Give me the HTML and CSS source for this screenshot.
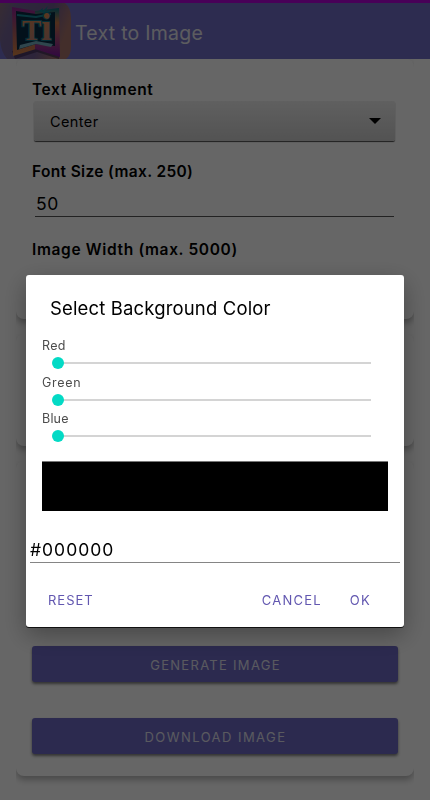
FILE: index.html
```
<!DOCTYPE html>
<html lang="en">
<head>
  <meta charset="UTF-8" />
  <meta name="viewport" content="width=device-width, initial-scale=1.0" />
  <title>Text to Image</title>
  <link rel="stylesheet" href="styles.css">
</head>
<body>
  <!-- App bar -->
  <header class="app-bar">
    <svg class="logo" width="72" height="56" viewBox="0 3 72 56">
      <defs>
        <linearGradient id="tile" x1="0" y1="0" x2="1" y2="0.3">
          <stop offset="0" stop-color="#8a6f80" />
          <stop offset="0.22" stop-color="#746497" />
          <stop offset="0.7" stop-color="#6f5a91" />
          <stop offset="1" stop-color="#a8746c" />
        </linearGradient>
        <linearGradient id="frameLeft" x1="0" y1="0" x2="0" y2="1">
          <stop offset="0" stop-color="#96229b" />
          <stop offset="0.45" stop-color="#a65765" />
          <stop offset="1" stop-color="#d98644" />
        </linearGradient>
        <linearGradient id="frameRight" x1="0" y1="0" x2="0" y2="1">
          <stop offset="0" stop-color="#087082" />
          <stop offset="0.3" stop-color="#c87748" />
          <stop offset="0.65" stop-color="#a6477d" />
          <stop offset="1" stop-color="#7a14a0" />
        </linearGradient>
        <linearGradient id="letters" x1="0" y1="0" x2="0" y2="1">
          <stop offset="0" stop-color="#e58a48" />
          <stop offset="1" stop-color="#b5807c" />
        </linearGradient>
      </defs>
      <path d="M0 3H65Q71 8 71 18V47Q71 55 66 59H7Q1 52 0 40Z" fill="url(#tile)" />
      <path d="M12 51L36 46L60 54L59 59L37 52L15 59Z" fill="#3d2b52" opacity=".7" />
      <path d="M12 7L36 11V49L13 56Z" fill="url(#frameLeft)" />
      <path d="M35 11L59 8L60 57L35 49Z" fill="url(#frameRight)" />
      <path d="M16 11L36 14L55 12V46L36 44L17 50Z" fill="#082b45" />
      <path d="M17 15L36 17L51 14" fill="none" stroke="#168696" stroke-width="2" />
      <path d="M20 45L36 41L53 44L51 47L36 44L19 49Z" fill="#77afc1" />
      <path d="M39 11L43 8L42 12L48 6L45 12L52 10L46 14Z" fill="#0b8494" />
      <text class="logo-text" x="22" y="40">T<tspan class="logo-i">i</tspan></text>
    </svg>
    <h1>Text to Image</h1>
  </header>

  <main class="page">
    <!-- Text settings -->
    <section class="card card-text">
      <p class="label label-align">Text Alignment</p>
      <div class="select">
        <span>Center</span>
        <i class="caret"></i>
      </div>
      <p class="label label-size">Font Size (max. 250)</p>
      <div class="field">50</div>
      <p class="label label-width">Image Width (max. 5000)</p>
    </section>

    <section class="card card-colors"></section>

    <!-- Actions -->
    <section class="card card-actions">
      <button class="btn btn-generate">GENERATE IMAGE</button>
      <button class="btn btn-download">DOWNLOAD IMAGE</button>
    </section>
  </main>

  <!-- Color picker dialog -->
  <div class="overlay">
    <div class="dialog">
      <h2>Select Background Color</h2>
      <div class="sliders">
        <div class="slider"><span class="name-red">Red</span><div class="track"></div></div>
        <div class="slider"><span class="name-green">Green</span><div class="track"></div></div>
        <div class="slider"><span class="name-blue">Blue</span><div class="track"></div></div>
      </div>
      <div class="preview"></div>
      <div class="hex">#000000</div>
      <div class="dialog-actions">
        <button class="link reset">RESET</button>
        <button class="link cancel">CANCEL</button>
        <button class="link ok">OK</button>
      </div>
    </div>
  </div>
</body>
</html>
```
FILE: styles.css
```
/* Base Styles */
*, *::before, *::after {
  box-sizing: border-box;
}
body {
  margin: 0;
  height: 800px;
  overflow: hidden;
  font-family: Inter, sans-serif;
  background: #fff;
  color: #000;
}
h1, h2, p {
  margin: 0;
}
button {
  font-family: inherit;
  border: none;
  padding: 0;
}

/* App bar */
.app-bar {
  display: flex;
  align-items: center;
  height: 59px;
  border-top: 3px solid #b400dc;
  background: #716fc8;
}
.logo {
  display: block;
}
.logo-text {
  font-family: "Liberation Serif", serif;
  font-size: 29px;
  font-weight: 700;
  fill: url(#letters);
  stroke: #0e7188;
  stroke-width: 2px;
  paint-order: stroke;
}
.logo-i {
  font-size: 37px;
}
.app-bar h1 {
  margin-left: 3px;
  padding-top: 3px;
  font-size: 19.5px;
  font-weight: 400;
  letter-spacing: 0.25px;
  color: #e6e6ee;
}

/* Cards */
.page {
  padding: 0 16px;
}
.card {
  padding: 0 16px;
  border-radius: 8px;
  box-shadow: 0 4px 6px rgba(0, 0, 0, 0.28);
  /* keep the shadow below the card only */
  clip-path: inset(0 0 -12px 0);
}
.card-text {
  height: 260px;
  padding-top: 21px;
}
.card-colors {
  height: 112px;
  margin-top: 15px;
}
.card-actions {
  height: 315px;
  margin-top: 15px;
  padding-top: 185px;
}
.label {
  font-size: 15.5px;
  line-height: 20px;
  font-weight: 600;
  white-space: nowrap;
}
.label-align {
  letter-spacing: 0.6px;
}
.label-size {
  letter-spacing: 0.35px;
}
.label-width {
  letter-spacing: 0.65px;
}
.select {
  display: flex;
  align-items: center;
  justify-content: space-between;
  width: 361px;
  height: 40px;
  margin: 1px 0 21px 2px;
  padding: 0 14px 0 16px;
  border-radius: 2px;
  background: linear-gradient(#efefef, #cfcfcf);
  box-shadow: 0 1px 1px rgba(0, 0, 0, 0.7);
  font-size: 14.5px;
  letter-spacing: 0.4px;
}
.caret {
  border: 6px solid transparent;
  border-top-color: #000;
  border-bottom: none;
}
.field {
  width: 359px;
  height: 35px;
  margin: 0 0 23px 3px;
  padding-left: 1px;
  border-bottom: 1px solid #555;
  font-size: 17.5px;
  line-height: 44px;
  letter-spacing: 0.5px;
}
.btn {
  display: block;
  width: 366px;
  height: 36px;
  padding-left: 1px;
  border-radius: 3px;
  background: #6e69c6;
  color: #e0e0ee;
  font-size: 13px;
  line-height: 38px;
  letter-spacing: 1.3px;
  box-shadow: 0 2px 3px rgba(0, 0, 0, 0.5);
}
.btn-download {
  margin-top: 36px;
  letter-spacing: 1.45px;
}

/* Dialog */
.overlay {
  position: fixed;
  inset: 0;
  padding: 275px 26px 0;
  background: rgba(0, 0, 0, 0.6);
}
.dialog {
  display: flex;
  flex-direction: column;
  height: 352px;
  border-radius: 3px;
  background: #fff;
  box-shadow: 0 1px 0 #111, 0 8px 24px rgba(0, 0, 0, 0.32);
}
.dialog h2 {
  padding: 21px 24px 0;
  font-size: 18.5px;
  line-height: 24px;
  font-weight: 400;
  letter-spacing: 0.15px;
  white-space: nowrap;
}
.sliders {
  margin: 17px 0 0 16px;
}
.slider {
  height: 36.7px;
  font-size: 12.5px;
  line-height: 18px;
  color: #4c4c4c;
}
.slider span {
  display: block;
}
.name-red {
  letter-spacing: 0.3px;
}
.name-green {
  letter-spacing: 0.7px;
}
.name-blue {
  letter-spacing: 0.2px;
}
.track {
  position: relative;
  width: 313px;
  height: 2px;
  margin: 7px 0 0 16px;
  background: #d4d4d4;
}
.track::before {
  content: "";
  position: absolute;
  left: -6px;
  top: -5px;
  width: 12px;
  height: 12px;
  border-radius: 50%;
  background: #03dac5;
}
.preview {
  height: 50px;
  margin: 14px 16px 0;
  border-top: 1px solid #777;
  background: #000;
}
.hex {
  height: 52px;
  margin: 0 4px;
  border-bottom: 1px solid #858585;
  font-size: 17.5px;
  line-height: 78px;
  letter-spacing: 1px;
}
.dialog-actions {
  display: flex;
  margin-top: 19px;
  padding: 0 33px 0 22px;
}
.link {
  height: 36px;
  background: none;
  color: #6257b0;
  font-size: 13px;
  letter-spacing: 1px;
}
.cancel {
  margin-left: auto;
  letter-spacing: 1.2px;
}
.ok {
  margin-left: 28px;
  letter-spacing: 1.3px;
}
```
